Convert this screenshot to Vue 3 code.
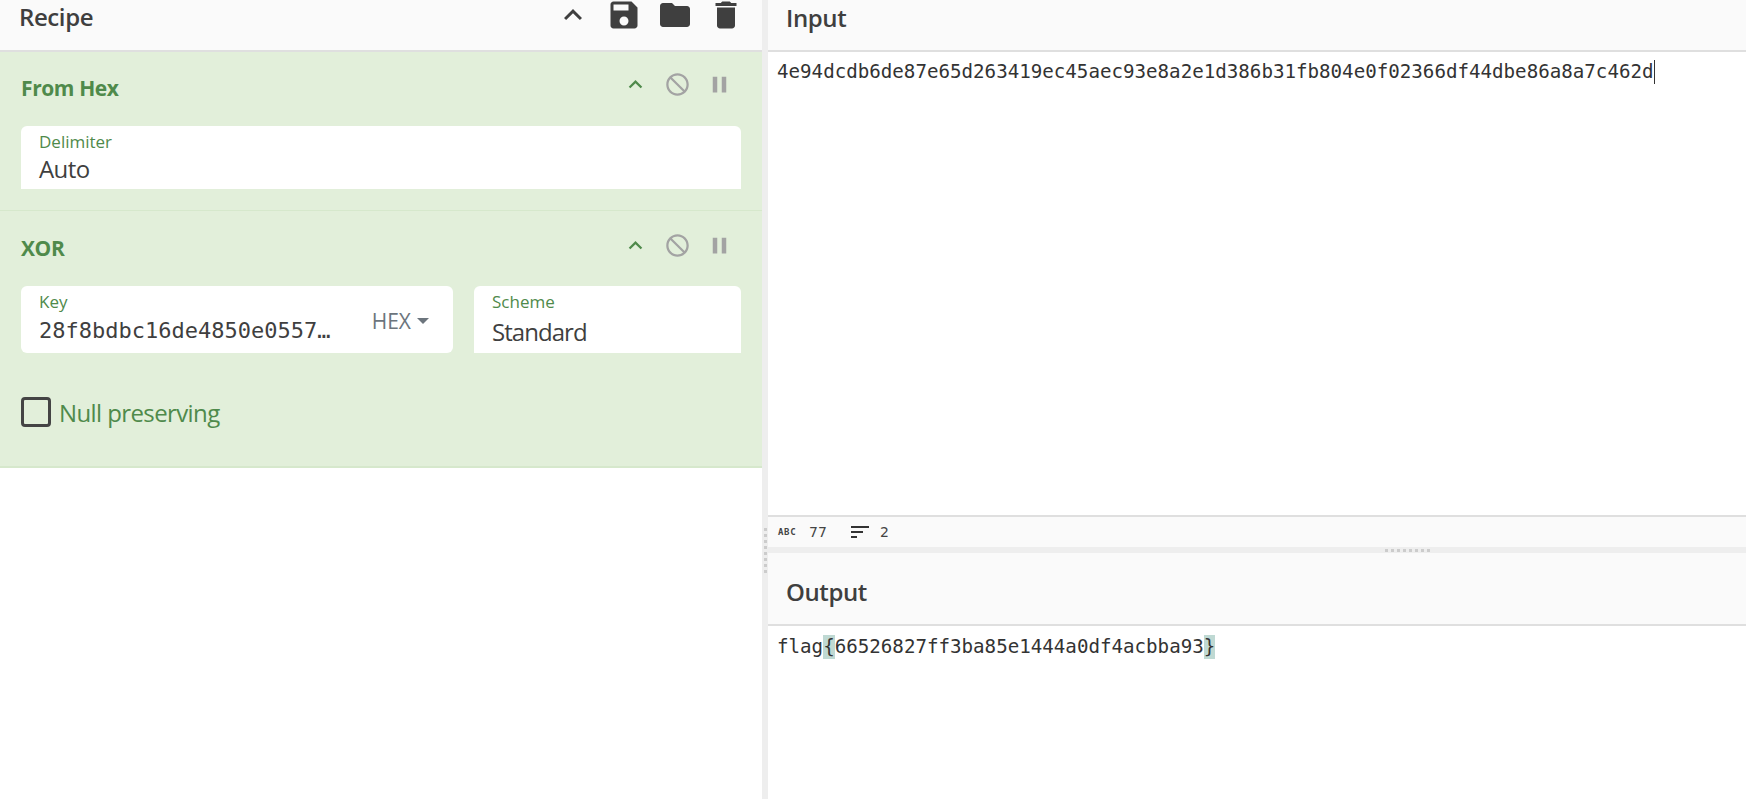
<script setup>
const ops = [
  { name: 'From Hex' },
  { name: 'XOR' },
]
const icons = {
  up: 'M7.41 15.41L12 10.83l4.59 4.58L18 14l-6-6-6 6z',
  save: 'M17 3H5c-1.11 0-2 .9-2 2v14c0 1.1.89 2 2 2h14c1.1 0 2-.9 2-2V7l-4-4zm-5 16c-1.66 0-3-1.34-3-3s1.34-3 3-3 3 1.34 3 3-1.34 3-3 3zm3-10H5V5h10v4z',
  folder: 'M10 4H4c-1.1 0-1.99.9-1.99 2L2 18c0 1.1.9 2 2 2h16c1.1 0 2-.9 2-2V8c0-1.1-.9-2-2-2h-8l-2-2z',
  trash: 'M6 19c0 1.1.9 2 2 2h8c1.1 0 2-.9 2-2V7H6v12zM19 4h-3.5l-1-1h-5l-1 1H5v2h14V4z',
  ban: 'M12 2C6.48 2 2 6.48 2 12s4.48 10 10 10 10-4.48 10-10S17.52 2 12 2zm0 18c-4.42 0-8-3.58-8-8 0-1.85.63-3.55 1.69-4.9L16.9 18.31C15.55 19.37 13.85 20 12 20zm6.31-3.1L7.1 5.69C8.45 4.63 10.15 4 12 4c4.42 0 8 3.58 8 8 0 1.85-.63 3.55-1.69 4.9z',
  pause: 'M6 19h4V5H6v14zm8-14v14h4V5h-4z',
  sort: 'M3 18h6v-2H3v2zM3 6v2h18V6H3zm0 7h12v-2H3v2z',
}
const headerIcons = ['up', 'save', 'folder', 'trash']
</script>

<template>
  <div class="app">
    <section class="recipe">
      <header class="head recipe-head">
        <h1>Recipe</h1>
        <div class="head-icons">
          <svg v-for="i in headerIcons" :key="i" class="hicon" viewBox="0 0 24 24"><path :d="icons[i]" /></svg>
        </div>
      </header>

      <article class="op op-hex">
        <div class="op-top">
          <h2>{{ ops[0].name }}</h2>
          <div class="op-icons">
            <svg class="oicon green" viewBox="0 0 24 24"><path :d="icons.up" /></svg>
            <svg class="oicon" viewBox="0 0 24 24"><path :d="icons.ban" /></svg>
            <svg class="oicon" viewBox="0 0 24 24"><path :d="icons.pause" /></svg>
          </div>
        </div>
        <div class="field full">
          <label>Delimiter</label>
          <div class="value">Auto</div>
        </div>
      </article>

      <article class="op op-xor">
        <div class="op-top">
          <h2>{{ ops[1].name }}</h2>
          <div class="op-icons">
            <svg class="oicon green" viewBox="0 0 24 24"><path :d="icons.up" /></svg>
            <svg class="oicon" viewBox="0 0 24 24"><path :d="icons.ban" /></svg>
            <svg class="oicon" viewBox="0 0 24 24"><path :d="icons.pause" /></svg>
          </div>
        </div>
        <div class="field-row">
          <div class="field key rounded">
            <div class="key-main">
              <label>Key</label>
              <div class="value mono">28f8bdbc16de4850e0557…</div>
            </div>
            <div class="hex">HEX<span class="caret"></span></div>
          </div>
          <div class="field scheme">
            <label>Scheme</label>
            <div class="value">Standard</div>
          </div>
        </div>
        <div class="check-row">
          <span class="check"></span>
          <span class="check-label">Null preserving</span>
        </div>
      </article>
    </section>

    <div class="vgutter"><span class="dots-v"></span></div>

    <section class="io">
      <header class="head input-head"><h1>Input</h1></header>
      <div class="input-body">
        <span class="code">4e94dcdb6de87e65d263419ec45aec93e8a2e1d386b31fb804e0f02366df44dbe86a8a7c462d<i class="cursor"></i></span>
      </div>
      <footer class="status">
        <span class="abc">ABC</span>
        <span class="num n1">77</span>
        <svg class="sort" viewBox="0 0 24 24" preserveAspectRatio="none"><path :d="icons.sort" /></svg>
        <span class="num">2</span>
      </footer>
      <div class="hgutter"><span class="dots-h"></span></div>
      <header class="head output-head"><h1>Output</h1></header>
      <div class="output-body">
        <span class="code">flag<mark>{</mark>66526827ff3ba85e1444a0df4acbba93<mark>}</mark></span>
      </div>
    </section>
  </div>
</template>

<style>
html, body { margin: 0; padding: 0; background: #fff; overflow: hidden; }
</style>

<style scoped>
.app {
  display: flex;
  width: 1746px;
  height: 799px;
  overflow: hidden;
  font-family: "Open Sans", "Noto Sans", sans-serif;
  color: #3f3f3f;
  background: #fff;
}
h1, h2 { margin: 0; }
.recipe { width: 762px; flex: none; display: flex; flex-direction: column; }
.vgutter {
  width: 6px;
  flex: none;
  background: #eee;
  display: flex;
  justify-content: center;
  padding-top: 528px;
  box-sizing: border-box;
}
.dots-v {
  width: 3px;
  height: 48px;
  background: repeating-linear-gradient(to bottom, #ccc 0 3px, transparent 3px 6px);
}
.io { flex: 1; min-width: 0; display: flex; flex-direction: column; }

.head {
  background: #fafafa;
  border-bottom: 2px solid #dfdfdf;
  box-sizing: border-box;
  display: flex;
  overflow: hidden;
}
.head h1 { font-size: 24px; font-weight: 600; line-height: 36px; color: #3f3f3f; margin-top: -1px; letter-spacing: -.4px; }
.recipe-head { height: 52px; padding: 0 18px 0 19px; align-items: flex-start; justify-content: space-between; flex: none; }
.input-head { height: 52px; padding: 1px 0 0 18px; flex: none; }
.output-head { height: 73px; padding: 22px 0 0 18px; flex: none; }
.head-icons { display: flex; gap: 15px; margin-top: -3px; }
.hicon { width: 36px; height: 36px; fill: #3f3f3f; display: block; }

.op { background: #e2efda; box-sizing: border-box; padding: 0 21px; flex: none; }
.op-hex { height: 159px; border-bottom: 1px solid #d6e8cc; }
.op-xor { height: 257px; border-bottom: 2px solid #d6e8cc; }
.op-top { display: flex; justify-content: space-between; box-sizing: border-box; }
.op-hex .op-top { height: 74px; padding-top: 19px; }
.op-xor .op-top { height: 75px; padding-top: 21px; }
.op-top h2 { font-size: 21px; font-weight: 700; line-height: 30px; color: #4f8a4b; letter-spacing: -.4px; }
.op-hex .op-top h2 { margin-top: 2px; }
.op-xor .op-top h2 { margin-top: 1px; }
.op-icons { display: flex; gap: 15px; margin-right: 8px; }
.oicon { width: 27px; height: 27px; fill: #a3a3a3; display: block; }
.oicon.green { fill: #4f8a4b; }

.field {
  background: #fff;
  border-radius: 6px 6px 0 0;
  box-sizing: border-box;
  padding: 5px 18px 0;
  height: 63px;
}
.field label { display: block; font-size: 17px; line-height: 22px; color: #4f8a4b; }
.value { font-size: 24px; line-height: 32px; color: #3f3f3f; letter-spacing: -.6px; }
.mono { font-family: "DejaVu Sans Mono", monospace; font-size: 22px; white-space: nowrap; letter-spacing: 0; }

.field-row { display: flex; gap: 21px; }
.field-row .field { height: 67px; }
.key .value { margin-top: 2px; }
.scheme .value { margin-top: 3px; letter-spacing: -.95px; }
.key { width: 432px; flex: none; display: flex; justify-content: space-between; border-radius: 6px; }
.scheme { flex: 1; padding-left: 18px; }
.hex { font-size: 21px; color: #6c757d; line-height: 30px; padding-top: 15px; margin-right: 6px; display: flex; }
.caret {
  width: 0; height: 0;
  border-left: 6px solid transparent;
  border-right: 6px solid transparent;
  border-top: 6px solid #6c757d;
  margin: 12px 0 0 6px;
}
.check-row { display: flex; align-items: flex-start; margin-top: 44px; gap: 8px; }
.check {
  width: 30px; height: 30px;
  border: 3px solid #444;
  border-radius: 4px;
  box-sizing: border-box;
}
.check-label { font-size: 24px; line-height: 32px; color: #4f8a4b; letter-spacing: -.6px; }

.input-body { height: 465px; flex: none; box-sizing: border-box; background: #fff; border-bottom: 2px solid #dfdfdf; padding: 8px 0 0 9px; }
.code { font-family: "DejaVu Sans Mono", monospace; font-size: 19.17px; line-height: 24px; color: #333; white-space: pre; display: inline-block; }
.cursor { display: inline-block; width: 1px; height: 24px; background: #333; vertical-align: top; }
mark { background: #bfd9d3; color: #333; display: inline-block; }

.status {
  height: 30px;
  flex: none;
  background: #fafafa;
  display: flex;
  align-items: center;
  padding-left: 10px;
  font-size: 14px;
  color: #444;
}
.abc { font-family: "DejaVu Sans Mono", monospace; font-size: 9px; font-weight: 700; width: 31px; letter-spacing: .7px; }
.num { font-family: "DejaVu Sans", sans-serif; font-size: 14px; }
.n1 { width: 39px; }
.sort { width: 24px; height: 24px; fill: #333; margin-right: 8px; }

.hgutter { height: 6px; flex: none; background: #eee; display: flex; align-items: center; padding-left: 617px; }
.dots-h {
  width: 48px;
  height: 3px;
  background: repeating-linear-gradient(to right, #ccc 0 3px, transparent 3px 6px);
}
.output-body { flex: 1; background: #fff; padding: 9px 0 0 9px; }
</style>
